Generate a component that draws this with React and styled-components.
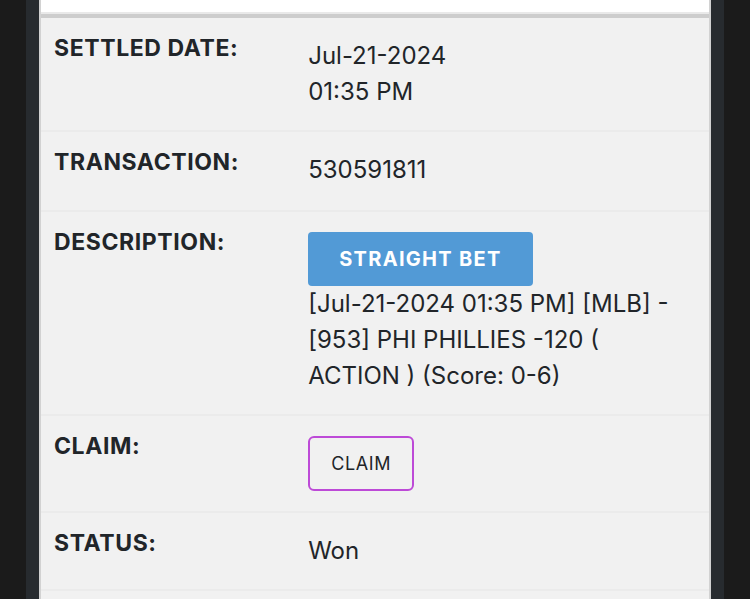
import React from "react";
import styled, { createGlobalStyle } from "styled-components";

const GlobalStyle = createGlobalStyle`
  html, body {
    margin: 0;
    padding: 0;
    background: #1b1b1b;
    height: 599px;
    overflow: hidden;
  }
  * {
    box-sizing: border-box;
  }
`;

const Page = styled.div`
  display: flex;
  justify-content: center;
  padding-left: 26px;
  padding-right: 26px;
  height: 599px;
`;

const Frame = styled.div`
  width: 100%;
  background: #272b2f;
  padding: 0 13px;
`;

const Card = styled.div`
  height: 100%;
  background: #f1f1f1;
  border-left: 2px solid #d2d2d2;
  border-right: 2px solid #d2d2d2;
  font-family: "Inter", "Liberation Sans", sans-serif;
  color: #212529;
`;

const TopSection = styled.div`
  height: 14px;
  background: #ffffff;
  border-bottom: 2px solid #e9e9e9;
`;

const Table = styled.div`
  border-top: 4px solid #cdcdcd;
`;

const Row = styled.div`
  display: grid;
  grid-template-columns: 40% 1fr;
  padding: 20px 0 ${(p) => (p.$tall ? 22 : 20)}px;
  border-bottom: 2px solid #ebebeb;
`;

const Label = styled.div`
  padding-left: 13px;
  font-size: 23px;
  font-weight: 700;
  line-height: 20px;
  letter-spacing: 0.6px;
`;

const Value = styled.div`
  font-size: 24px;
  line-height: 36px;
  padding-right: 24px;
`;

const TypeBadge = styled.div`
  display: inline-block;
  background: #529ad6;
  color: #ffffff;
  font-size: 20px;
  font-weight: 700;
  letter-spacing: 1.3px;
  height: 54px;
  line-height: 54px;
  padding: 0 31px;
  border-radius: 4px;
`;

const Description = styled.div`
  line-height: 36px;
`;

const ClaimButton = styled.button`
  display: block;
  height: 55px;
  padding: 0 21px;
  background: transparent;
  border: 2px solid #bd4ad7;
  border-radius: 6px;
  font-family: "Inter", "Liberation Sans", sans-serif;
  font-size: 18px;
  letter-spacing: 0.6px;
  color: #212529;
  cursor: pointer;
`;

const rows = [
  { label: "SETTLED DATE:", value: ["Jul-21-2024", "01:35 PM"] },
  { label: "TRANSACTION:", value: ["530591811"], tall: true },
];

function App() {
  return (
    <>
      <GlobalStyle />
      <Page>
        <Frame>
          <Card>
            <TopSection />
            <Table>
              {rows.map((r) => (
                <Row key={r.label} $tall={r.tall}>
                  <Label>{r.label}</Label>
                  <Value>
                    {r.value.map((v) => (
                      <div key={v}>{v}</div>
                    ))}
                  </Value>
                </Row>
              ))}
              <Row>
                <Label>DESCRIPTION:</Label>
                <Value>
                  <TypeBadge>STRAIGHT BET</TypeBadge>
                  <Description>
                    [Jul-21-2024 01:35 PM] [MLB] - [953] PHI PHILLIES -120 (
                    ACTION ) (Score: 0-6)
                  </Description>
                </Value>
              </Row>
              <Row>
                <Label>CLAIM:</Label>
                <Value>
                  <ClaimButton>CLAIM</ClaimButton>
                </Value>
              </Row>
              <Row>
                <Label>STATUS:</Label>
                <Value>Won</Value>
              </Row>
            </Table>
          </Card>
        </Frame>
      </Page>
    </>
  );
}

export default App;
